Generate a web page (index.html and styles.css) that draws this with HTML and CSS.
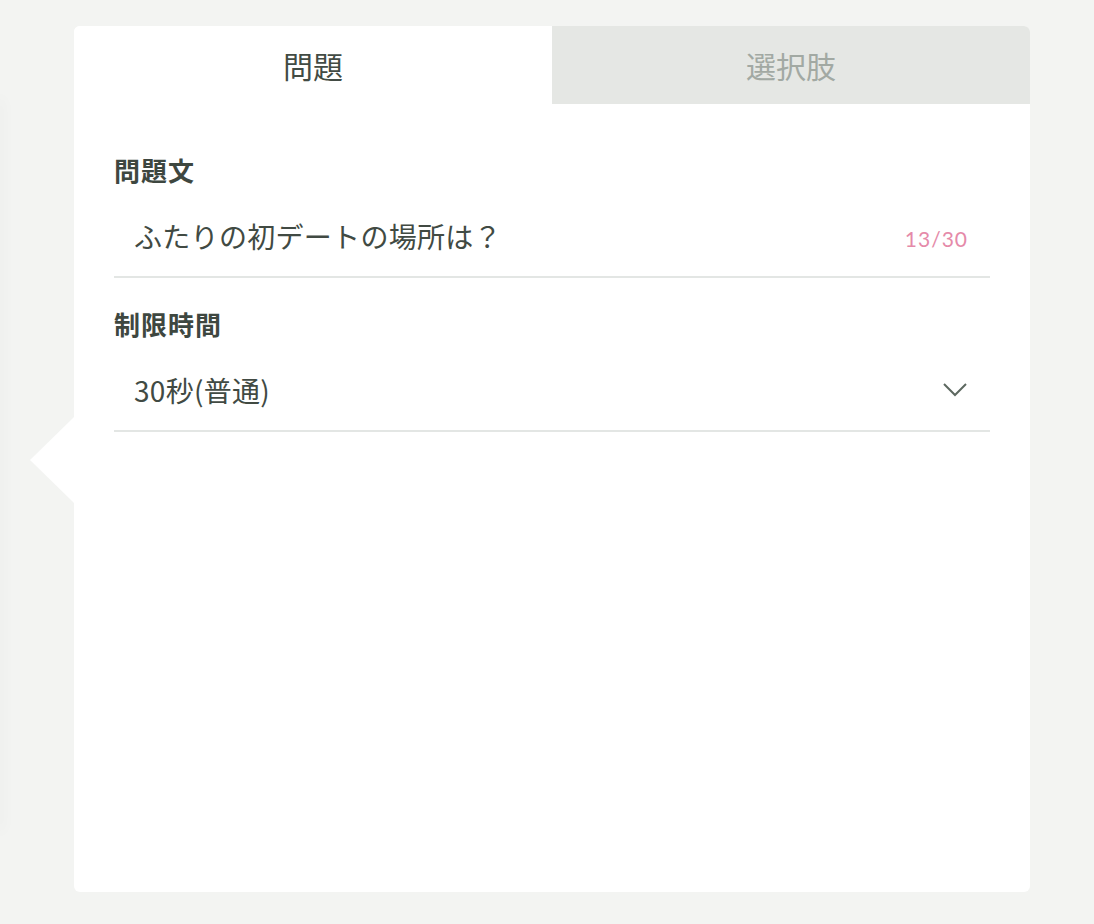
FILE: index.html
```html
<!DOCTYPE html>
<html lang="ja">
	<head>
		<meta charset="utf-8">
		<link rel="stylesheet" href="styles.css">
	</head>
	<body>
		<div class="side-panel"></div>

		<div class="editor">
			<div class="tabs">
				<div class="tab active">問題</div>
				<div class="tab">選択肢</div>
			</div>

			<div class="editor-body">
				<div class="field">
					<div class="field-label">問題文</div>
					<div class="field-row">
						<span class="field-value">ふたりの初デートの場所は？</span>
						<span class="counter">13/30</span>
					</div>
				</div>

				<div class="field">
					<div class="field-label">制限時間</div>
					<div class="field-row">
						<span class="field-value">30秒(普通)</span>
						<svg class="chevron" width="24" height="14" viewBox="0 0 24 14">
							<polyline points="1,1 12,12 23,1" fill="none" stroke="#5d6860" stroke-width="2"/>
						</svg>
					</div>
				</div>
			</div>
		</div>
	</body>
</html>
```

FILE: styles.css
```css
body {
	margin: 0;
	background-color: #f3f4f2;
	font-family: "Noto Sans CJK JP", "Noto Sans", sans-serif;
	color: #414a43;
	display: flex;
	align-items: flex-start;
	height: 924px;
	overflow: hidden;
}

.side-panel {
	width: 0;
	height: 730px;
	margin-top: 100px;
	box-shadow: 0 0 14px 2px rgba(0, 0, 0, 0.06);
}

.editor {
	position: relative;
	margin-left: 74px;
	margin-top: 26px;
	width: 956px;
	height: 866px;
	background-color: #fff;
	border-radius: 6px;
}
/* pointer to the item being edited */
.editor::before {
	content: "";
	position: absolute;
	left: -44px;
	top: 391px;
	border-right: 44px solid #fff;
	border-top: 43px solid transparent;
	border-bottom: 43px solid transparent;
}

.tabs {
	display: flex;
	height: 78px;
	border-radius: 6px 6px 0 0;
	overflow: hidden;
}
.tab {
	flex: 1;
	display: flex;
	align-items: center;
	justify-content: center;
	font-size: 30px;
	background-color: #e5e7e4;
	color: #a2a9a3;
}
.tab.active {
	background-color: #fff;
	color: #424b44;
}

.editor-body {
	padding: 48px 40px 0;
}

.field + .field {
	margin-top: 28px;
}

.field-label {
	font-size: 26px;
	font-weight: bold;
	line-height: 36px;
	letter-spacing: 1px;
	color: #3e4740;
}

.field-row {
	display: flex;
	align-items: center;
	justify-content: space-between;
	height: 40px;
	margin-top: 28px;
	padding: 0 22px 20px 20px;
	border-bottom: 2px solid #e3e6e4;
}

.field-value {
	font-size: 28px;
	line-height: 40px;
	letter-spacing: 0.3px;
}

.counter {
	font-family: Lato, "Noto Sans", sans-serif;
	font-size: 21px;
	line-height: 24px;
	letter-spacing: 1px;
	color: #e58aa9;
	margin-top: 6px;
}

.chevron {
	margin-right: 1px;
}
```
